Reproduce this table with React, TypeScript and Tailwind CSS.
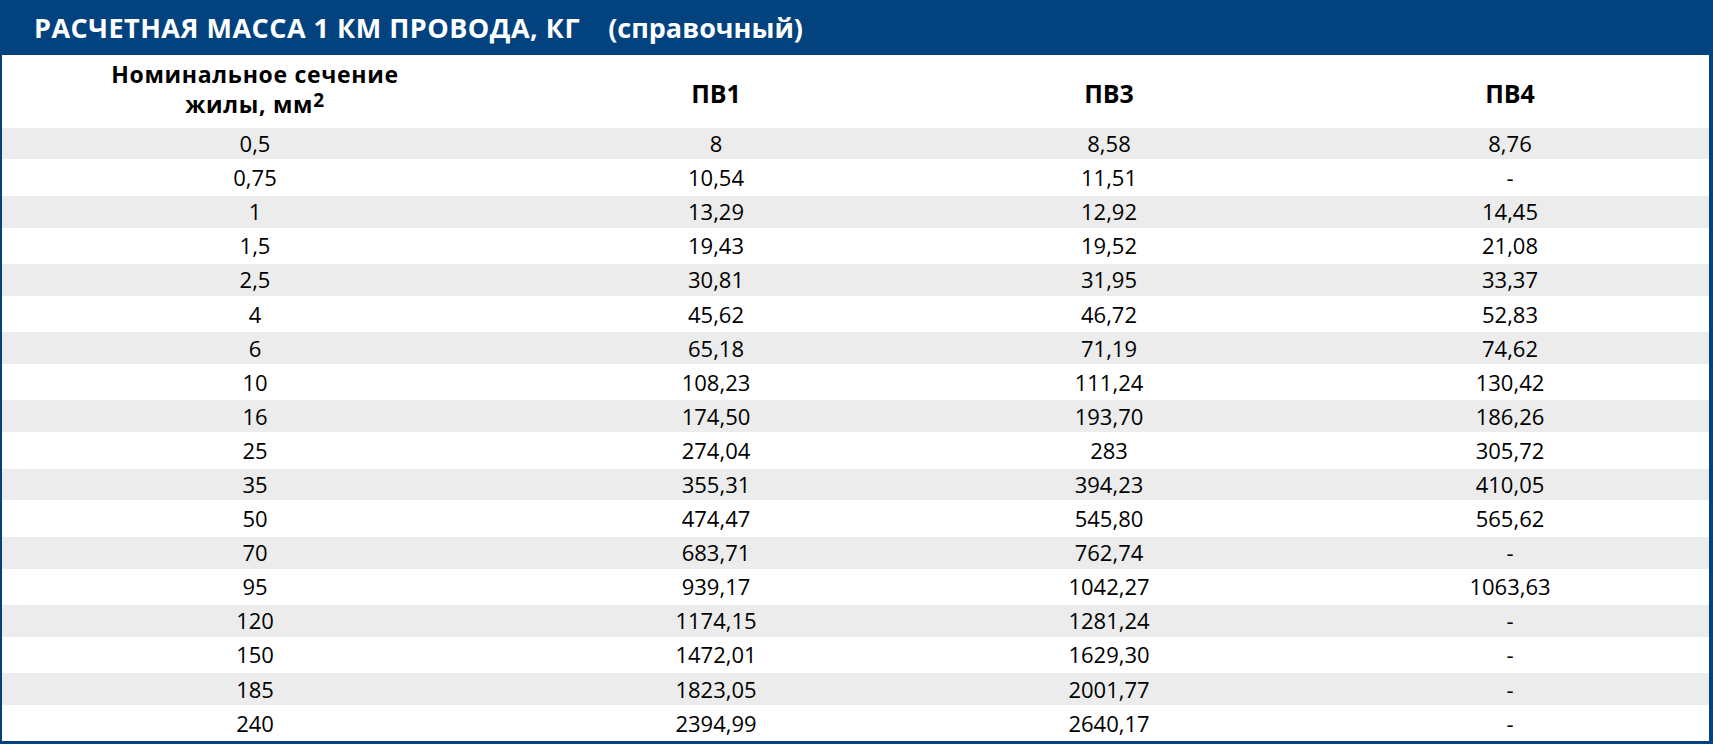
const ROWS: [string, string, string, string][] = [
  ["0,5", "8", "8,58", "8,76"],
  ["0,75", "10,54", "11,51", "-"],
  ["1", "13,29", "12,92", "14,45"],
  ["1,5", "19,43", "19,52", "21,08"],
  ["2,5", "30,81", "31,95", "33,37"],
  ["4", "45,62", "46,72", "52,83"],
  ["6", "65,18", "71,19", "74,62"],
  ["10", "108,23", "111,24", "130,42"],
  ["16", "174,50", "193,70", "186,26"],
  ["25", "274,04", "283", "305,72"],
  ["35", "355,31", "394,23", "410,05"],
  ["50", "474,47", "545,80", "565,62"],
  ["70", "683,71", "762,74", "-"],
  ["95", "939,17", "1042,27", "1063,63"],
  ["120", "1174,15", "1281,24", "-"],
  ["150", "1472,01", "1629,30", "-"],
  ["185", "1823,05", "2001,77", "-"],
  ["240", "2394,99", "2640,17", "-"],
];

// Column cells: fixed widths so the centres line up with the printed table.
function Cells({ values }: { values: string[] }) {
  return (
    <>
      <div className="w-[506px] shrink-0 text-center">{values[0]}</div>
      <div className="w-[416px] shrink-0 text-center">{values[1]}</div>
      <div className="w-[370px] shrink-0 text-center">{values[2]}</div>
      <div className="flex-1 pl-[17px] text-center">{values[3]}</div>
    </>
  );
}

export default function App() {
  return (
    <div
      className="flex h-[744px] w-[1713px] flex-col border-b-[3px] border-[#01427f] bg-white text-black"
      style={{ fontFamily: '"Open Sans", "Noto Sans", sans-serif' }}
    >
      <div className="flex h-[55px] shrink-0 items-center bg-[#01427f] pl-[34px] pt-[2px] text-[27px] font-bold text-white">
        <span className="tracking-[0.5px]">РАСЧЕТНАЯ МАССА 1 КМ ПРОВОДА, КГ</span>
        <span className="ml-[28px]">(справочный)</span>
      </div>
      <div className="flex flex-1 border-l-2 border-r-4 border-[#01427f]">
        <div className="flex flex-1 flex-col">
          <div className="flex h-[72.7px] shrink-0 items-center">
            <div className="w-[506px] shrink-0 pb-[5px] text-center text-[23px] leading-[30px] font-bold tracking-[0.7px]">
              Номинальное сечение
              <br />
              жилы, мм<sup className="top-[-0.3em] text-[19px]">2</sup>
            </div>
            <div className="w-[416px] shrink-0 pt-[4px] text-center text-[25px] font-bold">ПВ1</div>
            <div className="w-[370px] shrink-0 pt-[4px] text-center text-[25px] font-bold">ПВ3</div>
            <div className="flex-1 pl-[17px] pt-[4px] text-center text-[25px] font-bold">ПВ4</div>
          </div>
          {ROWS.map((row, i) => (
            <div
              key={row[0]}
              className={`flex shrink-0 items-center text-[22px] ${
                i % 2 === 0 ? "h-[31.7px] bg-[#ebeceb]" : "h-[36.5px] bg-white"
              }`}
            >
              <Cells values={row} />
            </div>
          ))}
        </div>
      </div>
    </div>
  );
}
